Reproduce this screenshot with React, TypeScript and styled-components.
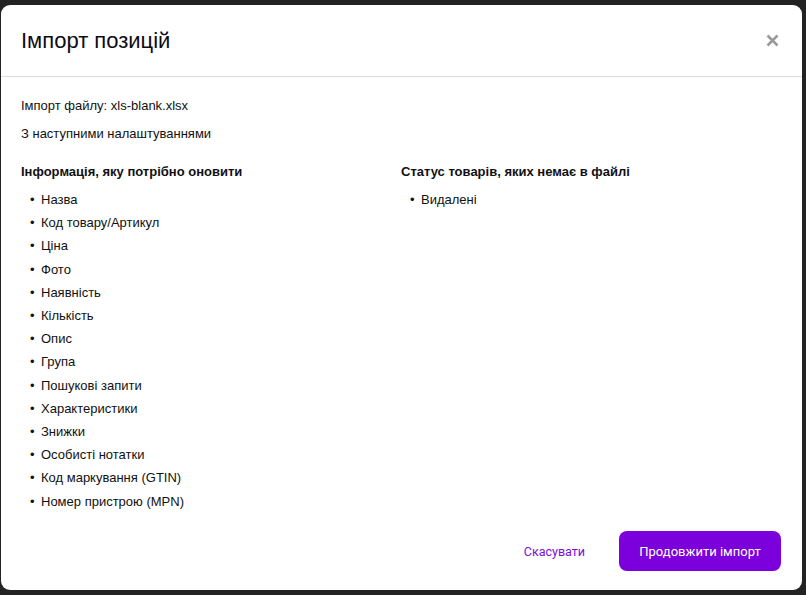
import React from "react";
import styled, { createGlobalStyle } from "styled-components";

const Global = createGlobalStyle`
  html, body { margin: 0; padding: 0; background: #232323; }
  body { font-family: "Liberation Sans", Arial, sans-serif; color: #111; }
  *, *::before, *::after { box-sizing: border-box; }
`;

const Page = styled.div`
  padding: 5px 4px 5px 1px;
  min-height: 595px;
`;

const Modal = styled.div`
  background: #fff;
  border-radius: 9px;
  height: 585px;
  display: flex;
  flex-direction: column;
`;

const Header = styled.div`
  height: 72px;
  display: flex;
  align-items: center;
  justify-content: space-between;
  padding: 0 23px 0 20px;
  border-bottom: 1px solid #dedede;
`;

const Title = styled.h2`
  margin: 0;
  font-size: 22px;
  font-weight: 400;
  color: #0c0c14;
  padding-top: 1px;
`;

const CloseButton = styled.button`
  border: none;
  background: none;
  padding: 0;
  width: 14px;
  height: 14px;
  display: flex;
  align-items: center;
  justify-content: center;
  cursor: pointer;
`;

const Body = styled.div`
  flex: 1;
  padding: 20px 20px 0 20px;
  font-size: 13px;
`;

const Para = styled.p<{ $mb: number }>`
  margin: 0 0 ${(p) => p.$mb}px;
  line-height: 17px;
`;

const Columns = styled.div`
  display: grid;
  grid-template-columns: 380px 380px;
`;

const Heading = styled.h3`
  margin: 0 0 8px;
  font-size: 13px;
  font-weight: 700;
  line-height: 17px;
`;

const List = styled.ul`
  list-style: none;
  margin: 0;
  padding: 0;
`;

const Item = styled.li`
  display: flex;
  line-height: 23.2px;
  &::before {
    content: "•";
    width: 20px;
    padding-left: 9px;
    flex: none;
  }
`;

const Footer = styled.div`
  display: flex;
  justify-content: flex-end;
  align-items: center;
  gap: 18px;
  padding: 0 21px 19px;
`;

const CancelButton = styled.button`
  border: none;
  background: none;
  font-family: Roboto, "Noto Sans", sans-serif;
  font-size: 12.5px;
  color: #7c0bdc;
  padding: 0 16px;
  height: 40px;
  cursor: pointer;
`;

const PrimaryButton = styled.button`
  border: none;
  background: #7b00db;
  color: #fff;
  font-family: Roboto, "Noto Sans", sans-serif;
  font-size: 13px;
  height: 40px;
  width: 162px;
  border-radius: 8px;
  cursor: pointer;
`;

const updateItems = [
  "Назва",
  "Код товару/Артикул",
  "Ціна",
  "Фото",
  "Наявність",
  "Кількість",
  "Опис",
  "Група",
  "Пошукові запити",
  "Характеристики",
  "Знижки",
  "Особисті нотатки",
  "Код маркування (GTIN)",
  "Номер пристрою (MPN)",
];

export default function App() {
  return (
    <>
      <Global />
      <Page>
        <Modal>
          <Header>
            <Title>Імпорт позицій</Title>
            <CloseButton aria-label="Закрити">
              <svg width="13" height="13" viewBox="0 0 13 13">
                <path d="M1.5 1.5 L11.5 11.5 M11.5 1.5 L1.5 11.5" stroke="#9a9a9a" strokeWidth="2.6" strokeLinecap="butt" />
              </svg>
            </CloseButton>
          </Header>
          <Body>
            <Para $mb={11}>Імпорт файлу: xls-blank.xlsx</Para>
            <Para $mb={21}>З наступними налаштуваннями</Para>
            <Columns>
              <div>
                <Heading>Інформація, яку потрібно оновити</Heading>
                <List>
                  {updateItems.map((t) => (
                    <Item key={t}>{t}</Item>
                  ))}
                </List>
              </div>
              <div>
                <Heading>Статус товарів, яких немає в файлі</Heading>
                <List>
                  <Item>Видалені</Item>
                </List>
              </div>
            </Columns>
          </Body>
          <Footer>
            <CancelButton>Скасувати</CancelButton>
            <PrimaryButton>Продовжити імпорт</PrimaryButton>
          </Footer>
        </Modal>
      </Page>
    </>
  );
}
